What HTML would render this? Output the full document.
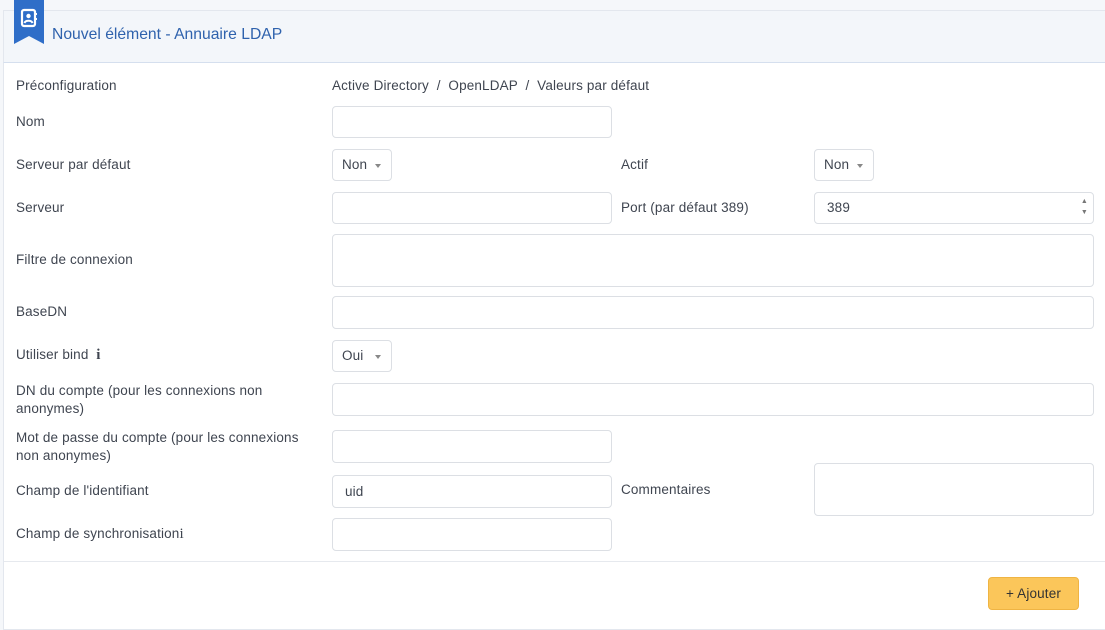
<!DOCTYPE html>
<html><head><meta charset="utf-8"><style>
*{box-sizing:border-box;margin:0;padding:0}
body{width:1105px;height:622px;overflow:hidden;background:#f5f7fa;font-family:"Liberation Sans",sans-serif;font-size:13.5px;letter-spacing:0.15px;color:#3f4550;position:relative}
.card{position:absolute;left:3px;top:10px;width:1110px;height:620px;background:#fff;border:1px solid #e3e7ee}
.hdr{position:absolute;left:3px;top:10px;width:1110px;height:53px;background:#f3f6fa;border:1px solid #e3e7ee;border-bottom:1px solid #d5dfee}
.t{position:absolute;white-space:nowrap;line-height:18px}
.in{position:absolute;border:1px solid #dcdfe4;border-radius:4px;background:#fff}
.sel{position:absolute;border:1px solid #dcdfe4;border-radius:4px;background:#fff;padding-left:9px;line-height:30px}
.sel:after{content:"";position:absolute;right:10px;top:14px;border:3.5px solid transparent;border-top:4px solid #888}
</style></head><body>
<div class="card"></div>
<div class="hdr"></div>
<svg style="position:absolute;left:14px;top:0" width="30" height="44" viewBox="0 0 30 44"><path d="M0 0H30V44L15 36L0 44Z" fill="#2f6ec8"/><rect x="8" y="10" width="13" height="16" rx="2" fill="none" stroke="#fff" stroke-width="2.2"/><circle cx="14.5" cy="16" r="2.2" fill="#fff"/><path d="M10.5 23c1-3 7-3 8 0" stroke="#fff" stroke-width="2" fill="none"/><path d="M22 13v2M22 18v2" stroke="#fff" stroke-width="2"/></svg>
<div class="t" style="left:52px;top:26px;font-size:15.7px;letter-spacing:0;color:#2f62ad">Nouvel élément - Annuaire LDAP</div>

<div class="t" style="left:16px;top:77px">Préconfiguration</div>
<div class="t" style="left:332px;top:77px">Active Directory &nbsp;/&nbsp; OpenLDAP &nbsp;/&nbsp; Valeurs par défaut</div>

<div class="t" style="left:16px;top:113px">Nom</div>
<div class="in" style="left:332px;top:106px;width:280px;height:32px"></div>

<div class="t" style="left:16px;top:156px">Serveur par défaut</div>
<div class="sel" style="left:332px;top:149px;width:60px;height:32px">Non</div>
<div class="t" style="left:621px;top:156px">Actif</div>
<div class="sel" style="left:814px;top:149px;width:60px;height:32px">Non</div>

<div class="t" style="left:16px;top:199px">Serveur</div>
<div class="in" style="left:332px;top:192px;width:280px;height:32px"></div>
<div class="t" style="left:621px;top:199px">Port (par défaut 389)</div>
<div class="in" style="left:814px;top:192px;width:280px;height:32px;padding-left:12px;line-height:30px">389<span style="position:absolute;right:5px;top:3px;font-size:7px;line-height:11px;color:#777">▲<br>▼</span></div>

<div class="t" style="left:16px;top:251px">Filtre de connexion</div>
<div class="in" style="left:332px;top:234px;width:762px;height:53px"></div>

<div class="t" style="left:16px;top:303px">BaseDN</div>
<div class="in" style="left:332px;top:296px;width:762px;height:33px"></div>

<div class="t" style="left:16px;top:346px">Utiliser bind &nbsp;<b style="font-family:'Liberation Serif';font-size:15px">i</b></div>
<div class="sel" style="left:332px;top:340px;width:60px;height:32px">Oui</div>

<div class="t" style="left:16px;top:382px">DN du compte (pour les connexions non<br>anonymes)</div>
<div class="in" style="left:332px;top:383px;width:762px;height:33px"></div>

<div class="t" style="left:16px;top:429px">Mot de passe du compte (pour les connexions<br>non anonymes)</div>
<div class="in" style="left:332px;top:430px;width:280px;height:33px"></div>

<div class="t" style="left:16px;top:482px">Champ de l'identifiant</div>
<div class="in" style="left:332px;top:475px;width:280px;height:33px;padding-left:12px;line-height:31px">uid</div>
<div class="t" style="left:621px;top:481px">Commentaires</div>
<div class="in" style="left:814px;top:463px;width:280px;height:53px"></div>

<div class="t" style="left:16px;top:525px">Champ de synchronisation<b style="font-family:'Liberation Serif';font-size:15px;font-weight:normal">i</b></div>
<div class="in" style="left:332px;top:518px;width:280px;height:33px"></div>

<div style="position:absolute;left:4px;top:561px;width:1101px;height:1px;background:#e6e9ee"></div>
<div style="position:absolute;left:988px;top:577px;width:91px;height:33px;background:#fbc65a;border:1px solid #efb443;border-radius:4px;text-align:center;line-height:31px;font-size:13.5px;color:#333">+ Ajouter</div>
</body></html>
